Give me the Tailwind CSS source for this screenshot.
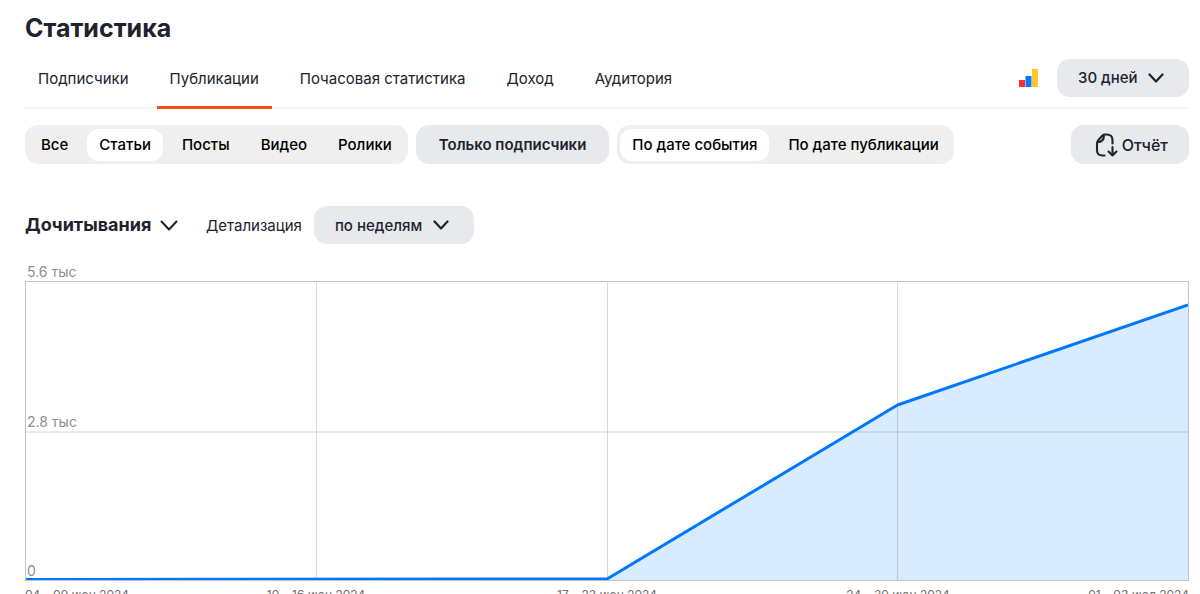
<!DOCTYPE html>
<html lang="ru">
<head>
<meta charset="utf-8">
<title>Статистика</title>
<script src="https://cdn.jsdelivr.net/npm/@tailwindcss/browser@4"></script>
</head>
<body class="h-screen overflow-hidden bg-white font-['Inter','Noto_Sans',sans-serif] text-[15px] text-[#21222c]">
<main class="flex flex-col pl-[25px] pr-[11px] pt-3">
  <h1 class="text-[25px] font-bold leading-8">Статистика</h1>

  <div class="mt-2 flex items-center border-b-2 border-[#f4f4f5]">
    <nav class="-mb-0.5 flex flex-1 gap-[15px]" aria-label="Разделы статистики">
      <a href="#subscribers" class="border-b-3 border-transparent px-[13px] py-[17px] leading-5">Подписчики</a>
      <a href="#publications" aria-current="page" class="border-b-3 border-[#fc4c1c] px-[13px] py-[17px] leading-5">Публикации</a>
      <a href="#hourly" class="border-b-3 border-transparent px-[13px] py-[17px] leading-5">Почасовая статистика</a>
      <a href="#income" class="border-b-3 border-transparent px-[13px] py-[17px] leading-5">Доход</a>
      <a href="#audience" class="border-b-3 border-transparent px-[13px] py-[17px] leading-5">Аудитория</a>
    </nav>
    <a href="#metrics" aria-label="Метрика" class="mr-[19px] mb-1">
      <svg class="h-[18px] w-[19px]" viewBox="0 0 19 18"><path fill="#fa2d37" d="M0 11h6v7H0z"/><path fill="#0a77ff" d="M6.500 7h6v11h-6z"/><path fill="#ffca28" d="M13 0h6v18h-6z"/></svg>
    </a>
    <div class="relative mb-1 flex">
      <select aria-label="Период" class="h-[38px] appearance-none rounded-[13px] bg-[#e8e9ed] pt-0.5 pl-[21px] pr-[51px] font-medium"><option>30 дней</option></select>
      <svg class="pointer-events-none absolute right-[25px] top-[14px] h-[10px] w-4" viewBox="0 0 16 10" fill="none" stroke="#21222c" stroke-width="2.200" stroke-linecap="round" stroke-linejoin="round"><path d="M1.500 1.500 8 8.500l6.500-7"/></svg>
    </div>
  </div>

  <div class="mt-4 flex items-center gap-2 font-medium">
    <div role="group" aria-label="Тип публикаций" class="flex h-[39px] items-center gap-[7px] rounded-[13px] bg-[#efefef] px-1 text-black">
      <button type="button" class="h-8 rounded-xl px-3 pt-0.5">Все</button>
      <button type="button" aria-pressed="true" class="h-8 rounded-xl bg-white px-3 pt-0.5">Статьи</button>
      <button type="button" class="h-8 rounded-xl px-3 pt-0.5">Посты</button>
      <button type="button" class="h-8 rounded-xl px-3 pt-0.5">Видео</button>
      <button type="button" class="h-8 rounded-xl px-3 pt-0.5">Ролики</button>
    </div>
    <button type="button" class="h-[39px] rounded-[13px] bg-[#e8e9ed] px-[23px] pt-0.5 font-semibold">Только подписчики</button>
    <div role="group" aria-label="Группировка по дате" class="flex h-[39px] items-center gap-[7px] rounded-[13px] bg-[#efefef] px-[3px] text-black">
      <button type="button" aria-pressed="true" class="h-8 rounded-xl bg-white px-3 pt-0.5">По дате события</button>
      <button type="button" class="h-8 rounded-xl px-3 pt-0.5">По дате публикации</button>
    </div>
    <button type="button" class="ml-auto flex h-[39px] items-center gap-1 rounded-[13px] bg-[#e8e9ed] pl-6 pr-[21px] text-base">
      <svg class="h-6 w-[23px]" viewBox="0 0 23 24" fill="none" stroke="#21222c" stroke-width="2.100" stroke-linecap="round" stroke-linejoin="round"><path d="M9.500 22.500H7.500C4 22.500 2 21 2 17.500V10.500C2 9 2.500 8 3.500 7l4-4.500C8.300 1.700 9 1.500 10 1.500h1.500c4 0 6 2 6 5.500v3.500M2.500 9.200C6.500 9.200 9 6.500 9 2M17.500 14v8.500m-4-4 4 4 4-4"/></svg>
      Отчёт
    </button>
  </div>

  <div class="mt-[42px] flex items-center">
    <div class="relative flex">
      <select aria-label="Показатель" class="h-8 appearance-none pr-[26px] text-lg font-bold"><option>Дочитывания</option></select>
      <svg class="pointer-events-none absolute right-0 top-[11px] h-[11px] w-[18px]" viewBox="0 0 18 11" fill="none" stroke="#21222c" stroke-width="2" stroke-linecap="round" stroke-linejoin="round"><path d="M1.500 1.500 9 9.500l7.500-8"/></svg>
    </div>
    <label for="detail" class="ml-7 pt-0.5">Детализация</label>
    <div class="relative ml-3 flex">
      <select id="detail" class="h-[38px] appearance-none rounded-[13px] bg-[#e8e9ed] pt-0.5 pl-[21px] pr-[51px] font-medium"><option>по неделям</option></select>
      <svg class="pointer-events-none absolute right-[25px] top-[14px] h-[10px] w-4" viewBox="0 0 16 10" fill="none" stroke="#21222c" stroke-width="2.200" stroke-linecap="round" stroke-linejoin="round"><path d="M1.500 1.500 8 8.500l6.500-7"/></svg>
    </div>
  </div>

  <section aria-label="График дочитываний" class="mt-5 text-sm leading-4 text-[#8f8f8f]">
    <p class="px-0.5">5.6 тыс</p>
    <div class="relative mt-px h-[300px] border border-[#c4c4c4]">
      <svg class="block h-full w-full" viewBox="0 0 1162 298" preserveAspectRatio="none" fill="none">
        <path d="M581 297 871.500 123 1162 23V298H581z" fill="#0077ff" fill-opacity=".15"/>
        <g stroke="#000" stroke-opacity=".15"><path d="M290.500 0v298M581.500 0v298M871.500 0v298"/><path stroke-opacity=".08" stroke-width="2" d="M0 150h1162"/></g>
        <path d="M0 297.500 581 297 871.500 123 1162 23" stroke="#0077ff" stroke-width="3" stroke-linejoin="round" vector-effect="non-scaling-stroke"/>
      </svg>
      <div class="absolute inset-0 flex flex-col justify-between px-px pt-[132px] pb-px"><p>2.8 тыс</p><p>0</p></div>
    </div>
    <div class="mt-1.5 grid grid-cols-[1fr_2fr_2fr_2fr_1fr] text-center text-xs whitespace-nowrap text-[#6f6f6f]">
      <span class="text-left">04 – 09 июн 2024</span><span>10 – 16 июн 2024</span><span>17 – 23 июн 2024</span><span>24 – 30 июн 2024</span><span class="text-right">01 – 03 июл 2024</span>
    </div>
  </section>
</main>
</body>
</html>
